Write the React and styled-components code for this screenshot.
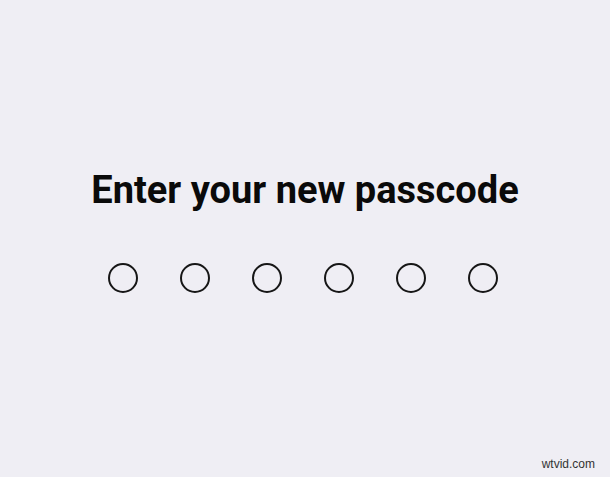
import React from "react";
import styled, { createGlobalStyle } from "styled-components";

const Global = createGlobalStyle`
  html, body { margin: 0; padding: 0; }
  body { background: #efeef4; font-family: Roboto, "Noto Sans", sans-serif; }
`;

const Screen = styled.div`
  position: relative;
  width: 610px;
  height: 477px;
  box-sizing: border-box;
  padding-top: 166px;
  display: flex;
  flex-direction: column;
  align-items: center;
  background: #efeef4;
`;

const Title = styled.h1`
  margin: 0;
  font-family: Roboto, "Noto Sans", sans-serif;
  font-weight: 700;
  font-size: 38px;
  line-height: 48px;
  letter-spacing: 0;
  color: #0a0a0a;
`;

const Dots = styled.div`
  margin-top: 49px;
  display: flex;
  gap: 42px;
  padding-right: 4px;
`;

const Dot = styled.span`
  width: 30px;
  height: 30px;
  box-sizing: border-box;
  border-radius: 50%;
  border: 2px solid ${(p) => (p.$filled ? "#111" : "#161616")};
  background: ${(p) => (p.$filled ? "#111" : "transparent")};
`;

const Mark = styled.span`
  position: absolute;
  right: 15px;
  bottom: 6px;
  font-family: "Liberation Sans", Arial, sans-serif;
  font-size: 12px;
  color: #333;
`;

export default function App() {
  const entered = 0;
  return (
    <>
      <Global />
      <Screen>
        <Title>Enter your new passcode</Title>
        <Dots>
          {Array.from({ length: 6 }, (_, i) => (
            <Dot key={i} $filled={i < entered} />
          ))}
        </Dots>
        <Mark>wtvid.com</Mark>
      </Screen>
    </>
  );
}
